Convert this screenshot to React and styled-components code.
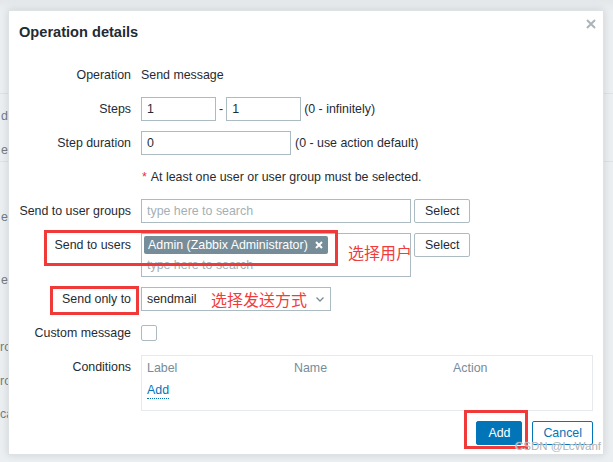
import React from 'react'
import styled, { createGlobalStyle } from 'styled-components'

const GlobalStyle = createGlobalStyle`
  html, body {
    margin: 0;
    padding: 0;
  }
  body {
    background: #eceff1;
    font-family: "Liberation Sans", Arial, sans-serif;
    font-size: 12.4px;
    color: #1f2c33;
  }
`

const Page = styled.div`
  position: relative;
  width: 613px;
  height: 462px;
  overflow: hidden;
  background: linear-gradient(#e4e7e9, #eceff1 12px);
`

// the page behind the modal, only a thin strip of it is visible
const Backdrop = styled.div`
  display: flex;
  flex-direction: column;
`

const BackRow = styled.div`
  box-sizing: border-box;
  height: ${p => p.$h}px;
  display: flex;
  align-items: center;
  border-bottom: ${p => (p.$line ? '1px solid #dde2e5' : 'none')};
`

const BackText = styled.span`
  min-width: 8px;
  display: flex;
  justify-content: flex-end;
  white-space: nowrap;
  color: #737c81;
`

const Dialog = styled.div`
  position: absolute;
  left: 8px;
  top: 10px;
  box-sizing: border-box;
  width: 596px;
  height: 445px;
  padding: 0 10px 9px;
  background: #fff;
  border: 1px solid #dde2e5;
  box-shadow: 0 0 8px rgba(0, 0, 0, 0.12);
  display: flex;
  flex-direction: column;
`

const Header = styled.div`
  height: 52px;
  display: flex;
  justify-content: space-between;
  align-items: flex-start;
`

const Title = styled.h4`
  margin: 13px 0 0;
  font-size: 14.6px;
  line-height: 16px;
  font-weight: bold;
  color: #1f2c33;
`

const Close = styled.button`
  margin: 8px -3px 0 0;
  padding: 0;
  width: 10px;
  height: 10px;
  border: 0;
  background: none;
  display: flex;
`

const Form = styled.div`
  display: grid;
  grid-template-columns: 112px 452px;
  column-gap: 10px;
  row-gap: 10px;
`

const Label = styled.div`
  text-align: right;
  line-height: 24px;
  white-space: nowrap;
`

const Field = styled.div`
  display: flex;
  align-items: ${p => (p.$top ? 'flex-start' : 'center')};
  min-height: 24px;
  line-height: 24px;
  white-space: nowrap;
`

const Input = styled.input`
  box-sizing: border-box;
  width: ${p => p.$w}px;
  height: 24px;
  margin: 0;
  padding: 0 5px;
  border: 1px solid #acbbc2;
  border-radius: 0;
  font: inherit;
  color: #1f2c33;
  background: #fff;
  outline: none;
`

const Dash = styled.span`
  margin: 0 3px;
`

const Hint = styled.span`
  margin-left: ${p => p.$gap || 3}px;
`

const Asterisk = styled.span`
  color: #e33734;
  margin: 0 4px 0 1px;
`

const Multi = styled.div`
  box-sizing: border-box;
  width: 270px;
  height: ${p => p.$h}px;
  border: 1px solid #acbbc2;
  background: #fff;
  display: flex;
  flex-direction: column;
  align-items: flex-start;
`

const Search = styled.input`
  box-sizing: border-box;
  width: 100%;
  height: ${p => p.$h}px;
  margin: ${p => p.$mt || 0}px 0 0;
  padding: 0 5px;
  border: 0;
  font: inherit;
  background: transparent;
  outline: none;
  &::placeholder {
    color: #a4afb5;
  }
`

const Tag = styled.span`
  display: inline-flex;
  align-items: center;
  gap: 7px;
  height: 18px;
  margin: 2px 0 0 2px;
  padding: 0 5px 0 4px;
  background: #768d99;
  color: #fff;
  border-radius: 2px;
  line-height: 18px;
`

const Button = styled.button`
  box-sizing: border-box;
  height: 24px;
  margin: 0 0 0 ${p => p.$ml || 0}px;
  padding: 0 ${p => p.$px || 10}px;
  font: inherit;
  line-height: 22px;
  border-radius: 2px;
  cursor: pointer;
  color: ${p => (p.$primary ? '#fff' : p.$outline ? '#0275b8' : '#1f2c33')};
  background: ${p => (p.$primary ? '#0275b8' : '#fff')};
  border: 1px solid ${p => (p.$primary || p.$outline ? '#0275b8' : '#acbbc2')};
`

const Dropdown = styled.div`
  box-sizing: border-box;
  width: 190px;
  height: 24px;
  padding: 0 6px 0 5px;
  border: 1px solid #acbbc2;
  display: flex;
  align-items: center;
  justify-content: space-between;
`

const Checkbox = styled.span`
  box-sizing: border-box;
  width: 16px;
  height: 16px;
  border: 1px solid #acbbc2;
  border-radius: 2px;
  background: #fff;
`

const Table = styled.div`
  box-sizing: border-box;
  width: 452px;
  height: 56px;
  padding: 4px 5px 0;
  border: 1px solid #e6eaec;
  line-height: 16px;
`

const TableHead = styled.div`
  display: grid;
  grid-template-columns: 147px 159px 1fr;
  color: #768d99;
`

const LinkAdd = styled.a`
  display: inline-block;
  margin-top: 6px;
  color: #0275b8;
  text-decoration: none;
  border-bottom: 1px dotted #0275b8;
  line-height: 16px;
`

const Footer = styled.div`
  margin-top: 10px;
  display: flex;
  justify-content: flex-end;
  gap: 10px;
`

// screenshot annotations lying over the dialog
const RedBox = styled.div`
  position: absolute;
  box-sizing: border-box;
  left: ${p => p.$x}px;
  top: ${p => p.$y}px;
  width: ${p => p.$w}px;
  height: ${p => p.$h}px;
  border: 3px solid #f03a3a;
  pointer-events: none;
`

const RedNote = styled.span`
  position: absolute;
  left: ${p => p.$x}px;
  top: ${p => p.$y}px;
  font-family: "Noto Sans CJK SC", sans-serif;
  font-size: 16px;
  line-height: 20px;
  color: #f03c3c;
  white-space: nowrap;
`

const Watermark = styled.span`
  position: absolute;
  left: 515px;
  top: 440px;
  font-size: 11.5px;
  color: #aeb3b6;
  text-shadow: 0 0 1px #fff;
  white-space: nowrap;
`

const backRows = [
  { h: 94, line: true },
  { h: 44, text: 'd' },
  { h: 24, text: 'e', line: true },
  { h: 38 },
  { h: 34, text: 'e' },
  { h: 29 },
  { h: 34, text: 'e' },
  { h: 33 },
  { h: 34, text: 'ro' },
  { h: 34, text: 'ro' },
  { h: 32, text: 'ca' },
]

const CloseIcon = () => (
  <svg width="10" height="10" viewBox="0 0 10 10">
    <path d="M1 1L9 9M9 1L1 9" stroke="#aab4b9" strokeWidth="2" />
  </svg>
)

const TagX = () => (
  <svg width="8" height="8" viewBox="0 0 8 8">
    <path d="M1 1L7 7M7 1L1 7" stroke="#fff" strokeWidth="2" />
  </svg>
)

const Chevron = () => (
  <svg width="8" height="5" viewBox="0 0 8 5">
    <path d="M0.5 0.5L4 4L7.5 0.5" fill="none" stroke="#768d99" strokeWidth="1.3" />
  </svg>
)

const App = () => {
  return (
    <Page>
      <GlobalStyle />
      <Backdrop>
        {backRows.map((row, i) => (
          <BackRow key={i} $h={row.h} $line={row.line}>
            {row.text && <BackText>{row.text}</BackText>}
          </BackRow>
        ))}
      </Backdrop>

      <Dialog>
        <Header>
          <Title>Operation details</Title>
          <Close title="Close"><CloseIcon /></Close>
        </Header>

        <Form>
          <Label>Operation</Label>
          <Field>Send message</Field>

          <Label>Steps</Label>
          <Field>
            <Input $w={75} defaultValue="1" />
            <Dash>-</Dash>
            <Input $w={75} defaultValue="1" />
            <Hint>(0 - infinitely)</Hint>
          </Field>

          <Label>Step duration</Label>
          <Field>
            <Input $w={150} defaultValue="0" />
            <Hint $gap={4}>(0 - use action default)</Hint>
          </Field>

          <Label />
          <Field>
            <Asterisk>*</Asterisk>At least one user or user group must be selected.
          </Field>

          <Label>Send to user groups</Label>
          <Field>
            <Multi $h={24}>
              <Search $h={22} placeholder="type here to search" />
            </Multi>
            <Button $ml={3}>Select</Button>
          </Field>

          <Label>Send to users</Label>
          <Field $top>
            <Multi $h={44}>
              <Tag>Admin (Zabbix Administrator)<TagX /></Tag>
              <Search $h={20} $mt={1} placeholder="type here to search" />
            </Multi>
            <Button $ml={3}>Select</Button>
          </Field>

          <Label>Send only to</Label>
          <Field>
            <Dropdown>
              <span>sendmail</span>
              <Chevron />
            </Dropdown>
          </Field>

          <Label>Custom message</Label>
          <Field>
            <Checkbox />
          </Field>

          <Label>Conditions</Label>
          <Field $top>
            <Table>
              <TableHead>
                <span>Label</span>
                <span>Name</span>
                <span>Action</span>
              </TableHead>
              <LinkAdd href="#">Add</LinkAdd>
            </Table>
          </Field>
        </Form>

        <Footer>
          <Button $primary $px={11}>Add</Button>
          <Button $outline>Cancel</Button>
        </Footer>

        <RedBox $x={35} $y={219} $w={294} $h={36} />
        <RedNote $x={339} $y={231}>选择用户</RedNote>
        <RedBox $x={41} $y={275} $w={89} $h={29} />
        <RedNote $x={202} $y={278}>选择发送方式</RedNote>
        <RedBox $x={455} $y={399} $w={64} $h={39} />
      </Dialog>

      <Watermark>CSDN @LcWanf</Watermark>
    </Page>
  )
}

export default App
